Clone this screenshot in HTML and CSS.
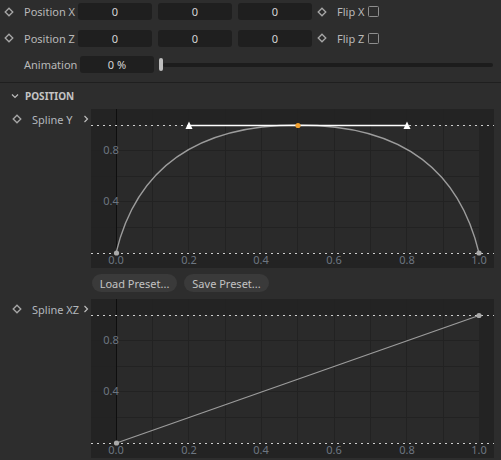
FILE: index.html
```html
<!DOCTYPE html>
<html lang="en">
<head>
    <meta charset="UTF-8">
    <title>Spline Attributes</title>
    <link rel="stylesheet" href="styles.css">
</head>
<body>
    <div class="params">
        <div class="row">
            <svg class="key" viewBox="0 0 10 10"><path d="M5 1.2 L8.8 5 L5 8.8 L1.2 5 Z"/></svg>
            <span class="label">Position X</span>
            <div class="field">0</div>
            <div class="field">0</div>
            <div class="field">0</div>
            <svg class="key key-flip" viewBox="0 0 10 10"><path d="M5 1.2 L8.8 5 L5 8.8 L1.2 5 Z"/></svg>
            <span class="flip-label">Flip X</span>
            <span class="check"></span>
        </div>
        <div class="row">
            <svg class="key" viewBox="0 0 10 10"><path d="M5 1.2 L8.8 5 L5 8.8 L1.2 5 Z"/></svg>
            <span class="label">Position Z</span>
            <div class="field">0</div>
            <div class="field">0</div>
            <div class="field">0</div>
            <svg class="key key-flip" viewBox="0 0 10 10"><path d="M5 1.2 L8.8 5 L5 8.8 L1.2 5 Z"/></svg>
            <span class="flip-label">Flip Z</span>
            <span class="check"></span>
        </div>
        <div class="row">
            <span class="key-space"></span>
            <span class="label label-wide">Animation</span>
            <div class="field">0 %</div>
            <div class="slider">
                <span class="slider-knob"></span>
                <span class="slider-track"></span>
            </div>
        </div>
    </div>

    <div class="group-head">
        <svg class="chevron-down" viewBox="0 0 8 6"><path d="M1 1.5 L4 4.5 L7 1.5"/></svg>
        <span>POSITION</span>
    </div>

    <div class="spline-row">
        <div class="spline-label">
            <svg class="key" viewBox="0 0 10 10"><path d="M5 1.2 L8.8 5 L5 8.8 L1.2 5 Z"/></svg>
            <span class="spline-name">Spline Y</span>
            <svg class="chevron-right" viewBox="0 0 6 8"><path d="M1.5 1 L4.5 4 L1.5 7"/></svg>
        </div>
        <svg class="graph" width="403" height="159" viewBox="0 0 403 159">
            <rect width="403" height="159" fill="#232323"/>
            <rect x="25" y="16" width="363" height="128" fill="#2a2a2a"/>
            <path class="grid" d="M61.5 0V144M97.5 0V144M134.5 0V144M170.5 0V144M206.5 0V144M243.5 0V144M279.5 0V144M315.5 0V144M352.5 0V144M0 41.5H388M0 67.5H388M0 92.5H388M0 118.5H388"/>
            <path class="axis" d="M25.5 0V144"/>
            <path class="limit" d="M0 16.5H403M0 144.5H403"/>
            <g class="ticks">
                <text x="20" y="45">0.8</text>
                <text x="20" y="96">0.4</text>
                <text x="25" y="155">0.0</text>
                <text x="98" y="155">0.2</text>
                <text x="170" y="155">0.4</text>
                <text x="243" y="155">0.6</text>
                <text x="316" y="155">0.8</text>
                <text x="388" y="155">1.0</text>
            </g>
            <path class="curve" d="M25 144 C44 65 98 16 207 16 C316 16 369 65 388 144"/>
            <path class="tangent" d="M98 16.5H316"/>
            <polygon class="handle" points="98,12.5 94.5,20 101.5,20"/>
            <polygon class="handle" points="316,12.5 312.5,20 319.5,20"/>
            <circle class="point-active" cx="207" cy="16.5" r="2.6"/>
            <circle class="point" cx="25.5" cy="144" r="2.6"/>
            <circle class="point" cx="388" cy="144" r="2.6"/>
        </svg>
    </div>

    <div class="preset-row">
        <button class="preset">Load Preset...</button>
        <button class="preset">Save Preset...</button>
    </div>

    <div class="spline-row">
        <div class="spline-label">
            <svg class="key" viewBox="0 0 10 10"><path d="M5 1.2 L8.8 5 L5 8.8 L1.2 5 Z"/></svg>
            <span class="spline-name">Spline XZ</span>
            <svg class="chevron-right" viewBox="0 0 6 8"><path d="M1.5 1 L4.5 4 L1.5 7"/></svg>
        </div>
        <svg class="graph" width="403" height="159" viewBox="0 0 403 159">
            <rect width="403" height="159" fill="#232323"/>
            <rect x="25" y="16" width="363" height="128" fill="#2a2a2a"/>
            <path class="grid" d="M61.5 0V144M97.5 0V144M134.5 0V144M170.5 0V144M206.5 0V144M243.5 0V144M279.5 0V144M315.5 0V144M352.5 0V144M0 41.5H388M0 67.5H388M0 92.5H388M0 118.5H388"/>
            <path class="axis" d="M25.5 0V144"/>
            <path class="limit" d="M0 16.5H403M0 144.5H403"/>
            <g class="ticks">
                <text x="20" y="45">0.8</text>
                <text x="20" y="96">0.4</text>
                <text x="25" y="155">0.0</text>
                <text x="98" y="155">0.2</text>
                <text x="170" y="155">0.4</text>
                <text x="243" y="155">0.6</text>
                <text x="316" y="155">0.8</text>
                <text x="388" y="155">1.0</text>
            </g>
            <path class="curve" d="M25.5 144 L388 16.5"/>
            <circle class="point" cx="25.5" cy="144" r="2.6"/>
            <circle class="point" cx="388" cy="16.5" r="2.6"/>
        </svg>
    </div>
</body>
</html>
```

FILE: styles.css
```css
body {
    margin: 0;
    width: 501px;
    height: 460px;
    overflow: hidden;
    background-color: #2d2d2d;
    color: #b9b9b9;
    font-family: "Noto Sans", sans-serif;
    font-size: 11px;
}

.params {
    padding: 3px 0 9px 4px;
    border-bottom: 1px solid #1f1f1f;
}

.row {
    display: flex;
    align-items: center;
    height: 17px;
    margin-bottom: 9.5px;
}

.row:last-child {
    margin-bottom: 0;
}

.key {
    width: 10px;
    height: 10px;
    margin-right: 10px;
    flex: none;
}

.key path {
    fill: none;
    stroke: #a8a8a8;
    stroke-width: 1.3;
}

.key-space {
    width: 20px;
    flex: none;
}

.label {
    width: 54px;
    flex: none;
    white-space: nowrap;
}

.label-wide {
    width: 56px;
}

.field {
    width: 74px;
    height: 17px;
    line-height: 17px;
    margin-right: 6px;
    flex: none;
    background-color: #1f1f1f;
    border-radius: 3px;
    text-align: center;
    color: #d6d6d6;
}

.key-flip {
    margin-left: -1px;
}

.flip-label {
    margin-right: 4px;
}

.check {
    width: 9px;
    height: 9px;
    border: 1.5px solid #8e8e8e;
    border-radius: 1.5px;
}

.slider {
    display: flex;
    align-items: center;
    flex: 1;
    margin-left: -1px;
    margin-right: 8px;
}

.slider-knob {
    width: 4px;
    height: 13px;
    border-radius: 2px;
    background-color: #bdbdbd;
}

.slider-track {
    flex: 1;
    height: 4px;
    border-radius: 2px;
    background-color: #1c1c1c;
}

.group-head {
    display: flex;
    align-items: center;
    height: 26px;
    padding-left: 11px;
    font-size: 10px;
    font-weight: 700;
    color: #c4c4c4;
}

.chevron-down {
    width: 8px;
    height: 6px;
    margin-right: 6px;
}

.chevron-down path,
.chevron-right path {
    fill: none;
    stroke: #bcbcbc;
    stroke-width: 1.2;
}

.spline-row {
    display: flex;
    align-items: flex-start;
}

.spline-label {
    display: flex;
    align-items: center;
    width: 91px;
    height: 20px;
    padding-left: 12px;
    box-sizing: border-box;
    flex: none;
    color: #b3b8bd;
}

.spline-label .key {
    margin-right: 10px;
}

.spline-name {
    flex: 1;
    white-space: nowrap;
}

.chevron-right {
    width: 6px;
    height: 8px;
    margin-right: 2px;
}

.graph {
    display: block;
    flex: none;
}

.grid {
    stroke: #222222;
    stroke-width: 1;
}

.axis {
    stroke: #0e0e0e;
    stroke-width: 1;
}

.limit {
    stroke: #cfcfcf;
    stroke-width: 1;
    stroke-dasharray: 2 4;
}

.ticks text {
    font-family: "Noto Sans", sans-serif;
    font-size: 11px;
    fill: #6d7681;
    text-anchor: middle;
}

.curve {
    fill: none;
    stroke: #9c9c9c;
    stroke-width: 1.3;
}

.tangent {
    stroke: #ffffff;
    stroke-width: 1.6;
}

.handle {
    fill: #ffffff;
}

.point {
    fill: #a9a9a9;
}

.point-active {
    fill: #f0a030;
}

.preset-row {
    display: flex;
    gap: 7px;
    padding: 6px 0 7px 92px;
}

.preset {
    width: 85px;
    height: 18px;
    padding: 0;
    border: none;
    border-radius: 9px;
    background-color: #3a3a3a;
    color: #c3c3c3;
    font-family: "Noto Sans", sans-serif;
    font-size: 11px;
}
```
